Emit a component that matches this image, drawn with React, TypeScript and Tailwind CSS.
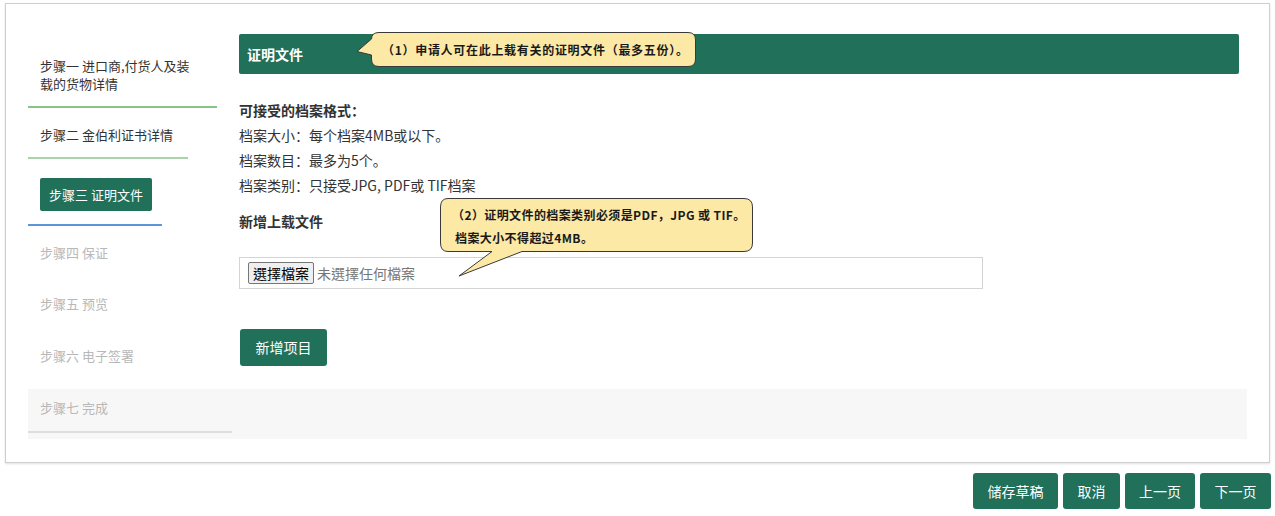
import React from "react";

const FONT = { fontFamily: '"Noto Sans CJK SC", "Noto Sans", "Liberation Sans", sans-serif' };

function Callouts() {
  return (
    <>
      <svg className="absolute left-0 top-0 pointer-events-none" width="1275" height="516" viewBox="0 0 1275 516">
        <path
          d="M379,32.5 H688 Q695.5,32.5 695.5,40 V59 Q695.5,66.5 688,66.5 H379 Q371.5,66.5 371.5,59 V55 L357,51.5 L371.5,39 Q371.5,32.5 379,32.5 Z"
          fill="#fde9a6"
          stroke="#3a3a3a"
          strokeWidth="1"
        />
        <path
          d="M448,198.5 H744 Q752.5,198.5 752.5,207 V243 Q752.5,251.5 744,251.5 H522 L459,276 L492,251.5 H448 Q440.5,251.5 440.5,243 V207 Q440.5,198.5 448,198.5 Z"
          fill="#fde9a6"
          stroke="#3a3a3a"
          strokeWidth="1"
        />
      </svg>
      <div
        className="absolute left-[382px] top-[41px] text-[12px] leading-[18px] font-bold text-[#1a1a1a] tracking-[0.7px] whitespace-nowrap"
        style={FONT}
      >
        （1）申请人可在此上载有关的证明文件（最多五份）。
      </div>
      <div
        className="absolute left-[452px] top-[203px] text-[12px] leading-[23px] font-bold text-[#1a1a1a] tracking-[0.4px] whitespace-nowrap"
        style={FONT}
      >
        <div>（2）证明文件的档案类别必须是PDF，JPG 或 TIF。</div>
        <div className="pl-[3px]">档案大小不得超过4MB。</div>
      </div>
    </>
  );
}

function Sidebar() {
  return (
    <div className="w-[204px] flex flex-col shrink-0">
      <div className="mt-[53px] pl-[12px] w-[180px] text-[13px] leading-[18px] text-[#333]">
        <div className="w-[158px]">步骤一 进口商,付货人及装载的货物详情</div>
      </div>
      <div className="mt-[13px] h-[2px] w-[189px] bg-[#86c488]" />
      <div className="mt-[18px] pl-[12px] text-[13px] leading-[18px] text-[#333]">步骤二 金伯利证书详情</div>
      <div className="mt-[13px] h-[2px] w-[160px] bg-[#a9d3aa]" />
      <div className="mt-[19px] ml-[12px] h-[33px] w-[112px] rounded-[2px] bg-[#20705a] text-white text-[13px] flex items-center justify-center">
        步骤三 证明文件
      </div>
      <div className="mt-[13px] h-[2px] w-[134px] bg-[#5b96dc]" />
      <div className="mt-[18px] pl-[12px] text-[13px] leading-[18px] text-[#b8b8b8]">步骤四 保证</div>
      <div className="mt-[33px] pl-[12px] text-[13px] leading-[18px] text-[#b8b8b8]">步骤五 预览</div>
      <div className="mt-[34px] pl-[12px] text-[13px] leading-[18px] text-[#b8b8b8]">步骤六 电子签署</div>
    </div>
  );
}

function Main() {
  return (
    <div className="w-[1000px] flex flex-col text-[14px] text-[#333]">
      <div className="mt-[30px] h-[40px] rounded-[2px] bg-[#20705a] flex items-center pl-[8px]">
        <span className="text-white font-bold text-[14px]">证明文件</span>
      </div>
      <div className="mt-[24px] leading-[25px]">
        <div className="font-bold">可接受的档案格式：</div>
        <div>档案大小：每个档案4MB或以下。</div>
        <div>档案数目：最多为5个。</div>
        <div>档案类别：只接受JPG, PDF或 TIF档案</div>
      </div>
      <div className="mt-[11px] leading-[25px] font-bold">新增上载文件</div>
      <div className="mt-[23px] h-[32px] w-[744px] border border-[#d4d4d4] flex items-center pl-[8px] gap-[3px]">
        <div
          className="h-[22px] px-[4px] border border-[#767676] bg-[#efefef] rounded-[2px] text-[14px] leading-[20px] text-black"
          style={{ fontFamily: '"Noto Sans CJK TC", "Noto Sans CJK SC", sans-serif' }}
        >
          選擇檔案
        </div>
        <span
          className="text-[14px] text-[#777]"
          style={{ fontFamily: '"Noto Sans CJK TC", "Noto Sans CJK SC", sans-serif' }}
        >
          未選擇任何檔案
        </span>
      </div>
      <div className="mt-[40px] ml-[1px] h-[37px] w-[87px] rounded-[3px] bg-[#20705a] text-white text-[14px] flex items-center justify-center">
        新增项目
      </div>
    </div>
  );
}

export default function App() {
  return (
    <div className="relative w-[1275px] h-[516px] bg-white overflow-hidden" style={FONT}>
      <div className="ml-[5px] mt-[3px] w-[1265px] border border-[#cfcfcf] shadow-[0_1px_2px_rgba(0,0,0,0.12)] px-[22px] pb-[23px]">
        <div className="flex gap-[7px]">
          <Sidebar />
          <Main />
        </div>
        <div className="mt-[23px] h-[50px] bg-[#f7f7f7] flex flex-col">
          <div className="mt-[10px] pl-[12px] text-[13px] leading-[18px] text-[#b8b8b8]">步骤七 完成</div>
          <div className="mt-[14px] h-[2px] w-[204px] bg-[#dedede]" />
        </div>
      </div>
      <div className="mt-[10px] pr-[4px] flex justify-end gap-[5px]">
        <div className="h-[36px] w-[85px] rounded-[3px] bg-[#20705a] text-white text-[14px] flex items-center justify-center">储存草稿</div>
        <div className="h-[36px] w-[57px] rounded-[3px] bg-[#20705a] text-white text-[14px] flex items-center justify-center">取消</div>
        <div className="h-[36px] w-[70px] rounded-[3px] bg-[#20705a] text-white text-[14px] flex items-center justify-center">上一页</div>
        <div className="h-[36px] w-[71px] rounded-[3px] bg-[#20705a] text-white text-[14px] flex items-center justify-center">下一页</div>
      </div>
      <Callouts />
    </div>
  );
}
